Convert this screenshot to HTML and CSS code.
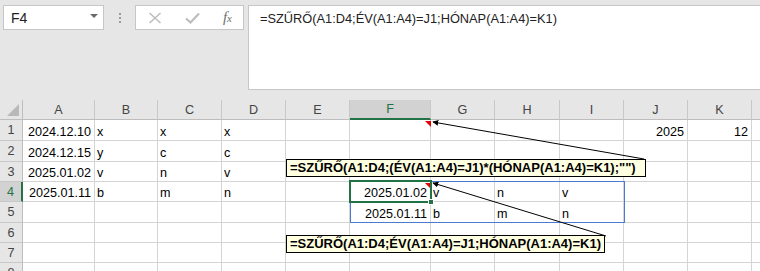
FILE: index.html
```html
<!DOCTYPE html>
<html lang="hu">
<head>
  <meta charset="UTF-8">
  <title>SZŰRŐ</title>
  <link rel="stylesheet" href="styles.css">
</head>
<body>

  <div class="toolbar">
    <div class="namebox">
      <span>F4</span>
      <span class="dropdown"></span>
    </div>
    <div class="grip"><i></i><i></i><i></i></div>
    <div class="fbuttons">
      <svg width="14" height="12" viewBox="0 0 14 12"><path d="M1.5 1 L12.5 11 M12.5 1 L1.5 11" stroke="#bdbdbd" stroke-width="1.6" fill="none"/></svg>
      <svg width="15" height="12" viewBox="0 0 15 12"><path d="M1 6.5 L5.5 10.5 L14 1.5" stroke="#bdbdbd" stroke-width="2.2" fill="none"/></svg>
      <span class="fx">f<sub>x</sub></span>
    </div>
    <div class="fbar">=SZŰRŐ(A1:D4;ÉV(A1:A4)=J1;HÓNAP(A1:A4)=K1)</div>
  </div>

  <div class="sheet">
    <div class="row head">
      <div class="corner"></div>
      <div class="ch">A</div><div class="ch">B</div><div class="ch">C</div><div class="ch">D</div><div class="ch">E</div>
      <div class="ch active">F</div><div class="ch">G</div><div class="ch">H</div><div class="ch">I</div><div class="ch">J</div><div class="ch">K</div><div class="ch"></div>
    </div>
    <div class="row tall">
      <div class="rh">1</div>
      <div class="c num">2024.12.10</div><div class="c">x</div><div class="c">x</div><div class="c">x</div><div class="c"></div>
      <div class="c"></div><div class="c"></div><div class="c"></div><div class="c"></div><div class="c num">2025</div><div class="c num">12</div><div class="c"></div>
    </div>
    <div class="row tall">
      <div class="rh">2</div>
      <div class="c num">2024.12.15</div><div class="c">y</div><div class="c">c</div><div class="c">c</div><div class="c"></div>
      <div class="c"></div><div class="c"></div><div class="c"></div><div class="c"></div><div class="c"></div><div class="c"></div><div class="c"></div>
    </div>
    <div class="row">
      <div class="rh">3</div>
      <div class="c num">2025.01.02</div><div class="c">v</div><div class="c">n</div><div class="c">v</div><div class="c"></div>
      <div class="c"></div><div class="c"></div><div class="c"></div><div class="c"></div><div class="c"></div><div class="c"></div><div class="c"></div>
    </div>
    <div class="row">
      <div class="rh active">4</div>
      <div class="c num">2025.01.11</div><div class="c">b</div><div class="c">m</div><div class="c">n</div><div class="c"></div>
      <div class="c num">2025.01.02</div><div class="c">v</div><div class="c">n</div><div class="c">v</div><div class="c"></div><div class="c"></div><div class="c"></div>
    </div>
    <div class="row tall">
      <div class="rh">5</div>
      <div class="c"></div><div class="c"></div><div class="c"></div><div class="c"></div><div class="c"></div>
      <div class="c num">2025.01.11</div><div class="c">b</div><div class="c">m</div><div class="c">n</div><div class="c"></div><div class="c"></div><div class="c"></div>
    </div>
    <div class="row">
      <div class="rh">6</div>
      <div class="c"></div><div class="c"></div><div class="c"></div><div class="c"></div><div class="c"></div>
      <div class="c"></div><div class="c"></div><div class="c"></div><div class="c"></div><div class="c"></div><div class="c"></div><div class="c"></div>
    </div>
    <div class="row">
      <div class="rh">7</div>
      <div class="c"></div><div class="c"></div><div class="c"></div><div class="c"></div><div class="c"></div>
      <div class="c"></div><div class="c"></div><div class="c"></div><div class="c"></div><div class="c"></div><div class="c"></div><div class="c"></div>
    </div>
    <div class="row">
      <div class="rh">8</div>
      <div class="c"></div><div class="c"></div><div class="c"></div><div class="c"></div><div class="c"></div>
      <div class="c"></div><div class="c"></div><div class="c"></div><div class="c"></div><div class="c"></div><div class="c"></div><div class="c"></div>
    </div>
  </div>

  <!-- overlays: spill range, active cell, notes -->
  <div class="spill"></div>
  <div class="selection"><span class="handle"></span></div>

  <svg class="arrows" width="760" height="271" viewBox="0 0 760 271">
    <defs>
      <marker id="head" viewBox="0 0 8 8" refX="7" refY="4" markerWidth="6" markerHeight="6" orient="auto">
        <path d="M0 0 L8 4 L0 8 Z" fill="#000"/>
      </marker>
    </defs>
    <polygon points="425,121 431,121 431,127" fill="#e00000"/>
    <polygon points="425,183 430,183 430,188" fill="#e00000"/>
    <line x1="644" y1="159" x2="433" y2="122" stroke="#000" stroke-width="1" marker-end="url(#head)"/>
    <line x1="606" y1="236" x2="433" y2="183" stroke="#000" stroke-width="1" marker-end="url(#head)"/>
  </svg>

  <div class="note note-1">=SZŰRŐ(A1:D4;(ÉV(A1:A4)=J1)*(HÓNAP(A1:A4)=K1);"")</div>
  <div class="note note-2">=SZŰRŐ(A1:D4;ÉV(A1:A4)=J1;HÓNAP(A1:A4)=K1)</div>

</body>
</html>
```

FILE: styles.css
```css
* {
  margin: 0;
  padding: 0;
  box-sizing: border-box;
}
body {
  width: 760px;
  height: 271px;
  overflow: hidden;
  position: relative;
  background: #fff;
  color: #000;
  font-family: "Liberation Sans", Arial, sans-serif;
}

/* formula bar */
.toolbar {
  height: 100px;
  background: #e6e6e6;
  display: flex;
  align-items: flex-start;
  padding: 5px 0 0 3px;
}
.namebox {
  width: 101px;
  height: 25px;
  background: #fff;
  border: 1px solid #c6c6c6;
  display: flex;
  align-items: center;
  justify-content: space-between;
  padding: 0 5px 0 7px;
  font-size: 14px;
  color: #222;
}
.dropdown {
  width: 0;
  height: 0;
  border-left: 4px solid transparent;
  border-right: 4px solid transparent;
  border-top: 4px solid #6a6a6a;
  margin-top: -3px;
}
.grip {
  width: 31px;
  height: 25px;
  display: flex;
  flex-direction: column;
  align-items: center;
  justify-content: center;
  gap: 2px;
}
.grip i {
  width: 2px;
  height: 2px;
  background: #9a9a9a;
}
.fbuttons {
  width: 109px;
  height: 25px;
  background: #fff;
  border: 1px solid #c6c6c6;
  display: flex;
  align-items: center;
  padding: 0 11px 0 12px;
  justify-content: space-between;
}
.fx {
  font-family: "Liberation Serif", serif;
  font-style: italic;
  font-size: 15px;
  color: #6e6e6e;
  line-height: 1;
}
.fx sub {
  font-size: 11px;
  vertical-align: 0;
}
.fbar {
  flex: 1;
  height: 85px;
  margin-left: 4px;
  margin-right: -2px;
  background: #fff;
  border: 1px solid #c6c6c6;
  padding: 5px 0 0 11px;
  font-size: 12.8px;
  line-height: 16px;
  color: #222;
  white-space: nowrap;
}

/* grid */
.row {
  display: grid;
  grid-template-columns: 23px 72px 63px 64px 64px 64px 81px 64px 65px 64px 64px 64px 64px;
  height: 20px;
}
.row.tall {
  height: 21px;
}
.c {
  border-right: 1px solid #d4d4d4;
  border-bottom: 1px solid #d4d4d4;
  font-size: 12.6px;
  line-height: 15px;
  padding: 0 3px 0 2px;
  display: flex;
  align-items: flex-end;
  white-space: nowrap;
}
.c.num {
  justify-content: flex-end;
}
.head {
  background: #e6e6e6;
}
.corner {
  border-right: 1px solid #bdbdbd;
  border-bottom: 1px solid #bdbdbd;
  position: relative;
}
.corner::after {
  content: "";
  position: absolute;
  right: 3px;
  bottom: 3px;
  border-left: 12px solid transparent;
  border-bottom: 12px solid #b9b9b9;
}
.ch {
  font-size: 12.6px;
  color: #444;
  display: flex;
  align-items: center;
  justify-content: center;
  border-right: 1px solid #c8c8c8;
  border-bottom: 1px solid #bdbdbd;
}
.ch.active {
  background: #d2d2d2;
  color: #217346;
  border-bottom: 2px solid #217346;
}
.rh {
  background: #e6e6e6;
  font-size: 12.6px;
  color: #444;
  display: flex;
  align-items: center;
  justify-content: center;
  border-right: 1px solid #bdbdbd;
  border-bottom: 1px solid #c8c8c8;
}
.rh.active {
  background: #d2d2d2;
  color: #217346;
  border-right: 2px solid #217346;
}

/* overlays */
.spill {
  position: absolute;
  left: 350px;
  top: 181px;
  width: 275px;
  height: 42px;
  border: 1px solid #4a7bd0;
}
.selection {
  position: absolute;
  left: 349px;
  top: 180px;
  width: 83px;
  height: 23px;
  border: 2px solid #217346;
}
.handle {
  position: absolute;
  right: -4px;
  bottom: -4px;
  width: 6px;
  height: 6px;
  background: #217346;
  border: 1px solid #fff;
}
.arrows {
  position: absolute;
  left: 0;
  top: 0;
}
.note {
  position: absolute;
  left: 286px;
  height: 18px;
  background: #ffffe1;
  border: 1px solid #000;
  font-size: 13px;
  font-weight: bold;
  line-height: 16px;
  padding: 0 3px 0 3px;
  white-space: nowrap;
}
.note-1 {
  top: 159px;
  width: 360px;
}
.note-2 {
  top: 235px;
  width: 319px;
}
```
